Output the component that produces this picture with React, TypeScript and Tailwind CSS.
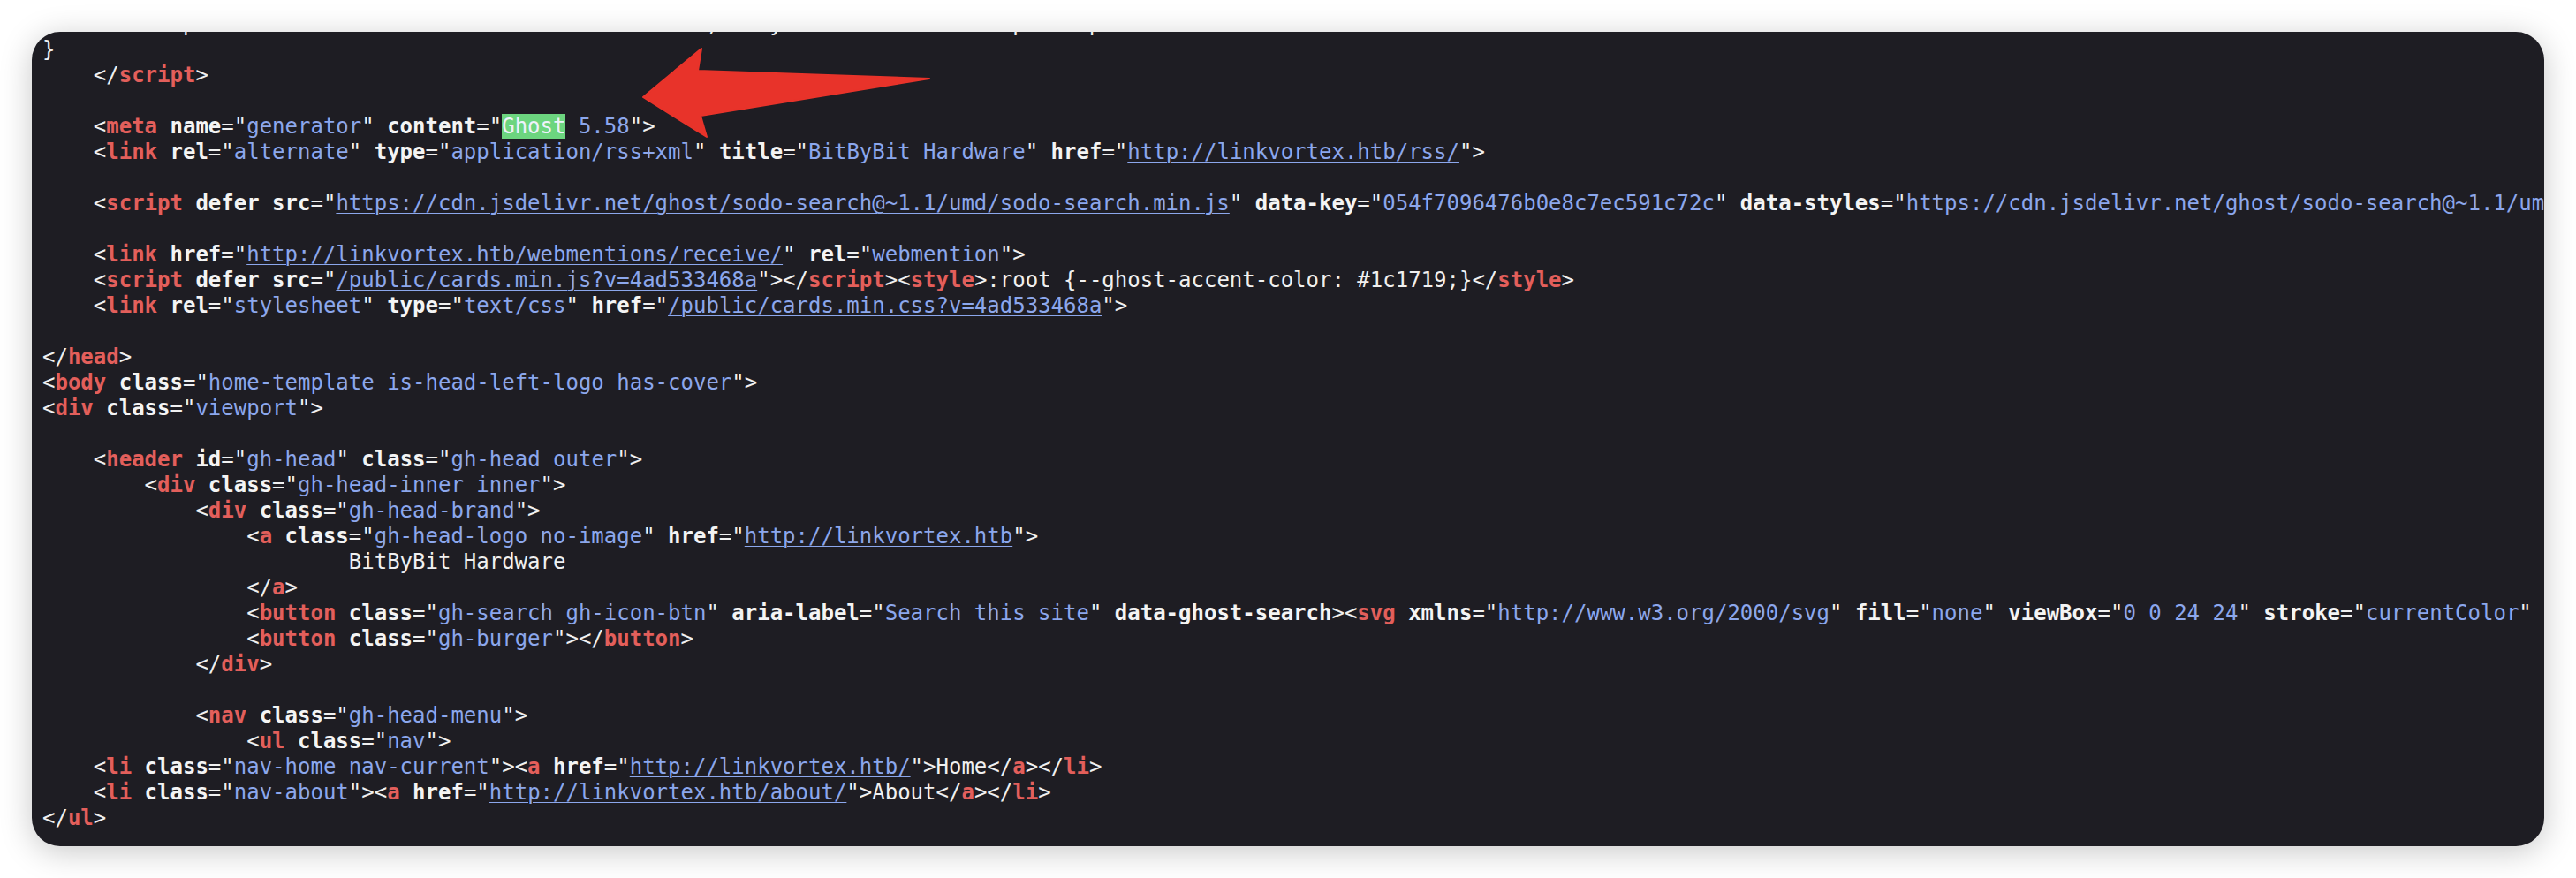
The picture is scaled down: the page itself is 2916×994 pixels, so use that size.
import React from 'react';

type Seg = { k: 'p' | 't' | 'a' | 'v' | 'u' | 'x'; s: string };

const lines = [
  '    "description": "Your trusted source for detailed, easy to understand computer parts info"',
  '}',
  '    </script>',
  '',
  '    <meta name="generator" content="Ghost 5.58">',
  '    <link rel="alternate" type="application/rss+xml" title="BitByBit Hardware" href="http://linkvortex.htb/rss/">',
  '',
  '    <script defer src="https://cdn.jsdelivr.net/ghost/sodo-search@~1.1/umd/sodo-search.min.js" data-key="054f7096476b0e8c7ec591c72c" data-styles="https://cdn.jsdelivr.net/ghost/sodo-search@~1.1/umd/main.css" crossorigin="anonymous"></script>',
  '',
  '    <link href="http://linkvortex.htb/webmentions/receive/" rel="webmention">',
  '    <script defer src="/public/cards.min.js?v=4ad533468a"></script><style>:root {--ghost-accent-color: #1c1719;}</style>',
  '    <link rel="stylesheet" type="text/css" href="/public/cards.min.css?v=4ad533468a">',
  '',
  '</head>',
  '<body class="home-template is-head-left-logo has-cover">',
  '<div class="viewport">',
  '',
  '    <header id="gh-head" class="gh-head outer">',
  '        <div class="gh-head-inner inner">',
  '            <div class="gh-head-brand">',
  '                <a class="gh-head-logo no-image" href="http://linkvortex.htb">',
  '                        BitByBit Hardware',
  '                </a>',
  '                <button class="gh-search gh-icon-btn" aria-label="Search this site" data-ghost-search><svg xmlns="http://www.w3.org/2000/svg" fill="none" viewBox="0 0 24 24" stroke="currentColor" stroke-width="2" width="20" height="20"><path stroke-linecap="round" stroke-linejoin="round" d="M21 21l-6-6m2-5a7 7 0 11-14 0 7 7 0 0114 0z"></path></svg></button>',
  '                <button class="gh-burger"></button>',
  '            </div>',
  '',
  '            <nav class="gh-head-menu">',
  '                <ul class="nav">',
  '    <li class="nav-home nav-current"><a href="http://linkvortex.htb/">Home</a></li>',
  '    <li class="nav-about"><a href="http://linkvortex.htb/about/">About</a></li>',
  '</ul>',
];

// very small html highlighter, good enough for view-source lines
function tokenize(line: string): Seg[] {
  const out: Seg[] = [];
  let i = 0;
  while (i < line.length) {
    if (line[i] === '<') {
      let j = i + 1;
      if (line[j] === '/') j++;
      out.push({ k: 'p', s: line.slice(i, j) });
      let n = j;
      while (n < line.length && /[a-zA-Z0-9]/.test(line[n])) n++;
      out.push({ k: 't', s: line.slice(j, n) });
      i = n;
      while (i < line.length && line[i] !== '>') {
        if (line[i] === ' ') {
          const s = i;
          while (line[i] === ' ') i++;
          out.push({ k: 'x', s: line.slice(s, i) });
          continue;
        }
        const s = i;
        while (i < line.length && /[^\s=>]/.test(line[i])) i++;
        const name = line.slice(s, i);
        out.push({ k: 'a', s: name });
        if (line[i] === '=') {
          out.push({ k: 'p', s: '="' });
          i += 2;
          let e = line.indexOf('"', i);
          if (e < 0) e = line.length;
          out.push({ k: name === 'href' || name === 'src' ? 'u' : 'v', s: line.slice(i, e) });
          if (e < line.length) out.push({ k: 'p', s: '"' });
          i = e + 1;
        }
      }
      if (i < line.length) {
        out.push({ k: 'p', s: '>' });
        i++;
      }
    } else {
      let e = line.indexOf('<', i);
      if (e < 0) e = line.length;
      out.push({ k: 'x', s: line.slice(i, e) });
      i = e;
    }
  }
  return out;
}

const segClass: Record<Seg['k'], string> = {
  p: 'text-[#f0f0f0]',
  t: 'text-[#e35f5b] font-bold',
  a: 'text-[#f4f4f4] font-bold',
  v: 'text-[#8ca7ec]',
  u: 'text-[#8ca7ec] underline underline-offset-[3px] decoration-1',
  x: 'text-[#f0f0f0]',
};

function Segment({ seg }: { seg: Seg }) {
  if (seg.k === 'v' && seg.s.startsWith('Ghost ')) {
    return (
      <span className={segClass.v}>
        <span className="bg-[#6cd57f] text-[#eef2fc]">Ghost</span>
        {seg.s.slice(5)}
      </span>
    );
  }
  return <span className={segClass[seg.k]}>{seg.s}</span>;
}

function Arrow() {
  return (
    <svg
      className="absolute left-[680px] top-[10px]"
      width="340"
      height="120"
      viewBox="0 0 340 120"
    >
      <polygon
        points="12,64 78,9 74,34 336,43 77,85 84,109"
        fill="#e8332a"
        stroke="#e8332a"
        strokeWidth="2"
        strokeLinejoin="round"
      />
    </svg>
  );
}

export default function App() {
  return (
    <div className="w-[2916px] h-[994px] bg-white p-9">
      <div className="relative h-full overflow-hidden rounded-[32px] bg-[#1e1d23] shadow-[0_6px_36px_rgba(0,0,0,0.22)]">
        <pre className="-mt-[23px] pl-3 font-['DejaVu_Sans_Mono',monospace] text-[24px] leading-[29px] whitespace-pre">
          {lines.map((line, idx) => (
            <div key={idx} className="h-[29px]">
              {tokenize(line).map((seg, j) => (
                <Segment key={j} seg={seg} />
              ))}
            </div>
          ))}
        </pre>
        <Arrow />
      </div>
    </div>
  );
}
